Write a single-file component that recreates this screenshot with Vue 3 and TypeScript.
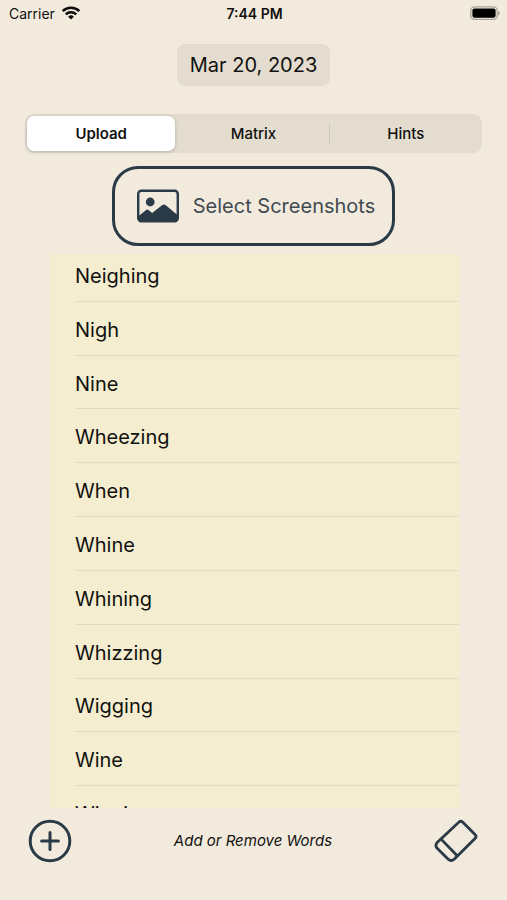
<script setup lang="ts">
import { ref } from 'vue'

const tabs: string[] = ['Upload', 'Matrix', 'Hints']
const active = ref<number>(0)
const words = ref<string[]>([
  'Neighing', 'Nigh', 'Nine', 'Wheezing', 'When', 'Whine',
  'Whining', 'Whizzing', 'Wigging', 'Wine', 'Winning',
])
</script>

<template>
  <div class="screen">
    <header class="status">
      <div class="carrier">
        <span>Carrier</span>
        <svg width="20" height="14" viewBox="0 0 20 14" aria-hidden="true">
          <g fill="none" stroke="#0b0b0a" stroke-width="2.5">
            <path d="M1.7 5.2a11.8 11.8 0 0 1 16.6 0" />
            <path d="M4.8 8.4a7.4 7.4 0 0 1 10.4 0" />
          </g>
          <path d="M10 13.6 7.1 10.7a4.1 4.1 0 0 1 5.8 0z" fill="#0b0b0a" />
        </svg>
      </div>
      <span class="clock">7:44 PM</span>
      <svg class="battery" width="30" height="14" viewBox="0 0 30 14" aria-hidden="true">
        <rect x="0.8" y="0.8" width="26.4" height="12.6" rx="3.8" fill="none" stroke="#a8a398" stroke-width="1.3" />
        <rect x="2.4" y="2.4" width="23.2" height="9.4" rx="2.2" fill="#000" />
        <path d="M28.2 5a2.3 2.3 0 0 1 0 4.4z" fill="#a8a398" />
      </svg>
    </header>

    <button type="button" class="date">Mar 20, 2023</button>

    <div class="tabs" role="tablist">
      <button
        v-for="(tab, i) in tabs"
        :key="tab"
        type="button"
        role="tab"
        class="tab"
        :class="{ active: i === active, divided: i > 0 && i !== active && i - 1 !== active }"
        :aria-selected="i === active"
        @click="active = i"
      >{{ tab }}</button>
    </div>

    <button type="button" class="select">
      <svg width="44" height="34" viewBox="0 0 44 34" aria-hidden="true">
        <rect x="2.2" y="1.7" width="39.6" height="30.6" rx="3.2" fill="none" stroke="#2a3a47" stroke-width="2.4" />
        <circle cx="14.2" cy="13" r="4.4" fill="#2a3a47" />
        <path d="M2 27.400 9.800 21.200q1.500-1.200 3 0l3.300 2.900 9.900-7.800q1.900-1.500 3.800 0L42 26.600v3.400q0 2.500-2.500 2.500h-35Q2 32.500 2 30z" fill="#2a3a47" />
      </svg>
      <span>Select Screenshots</span>
    </button>

    <main class="list">
      <ul class="words">
        <li v-for="word in words" :key="word">{{ word }}</li>
      </ul>
    </main>

    <footer class="footer">
      <button type="button" class="icon" aria-label="Add word">
        <svg width="44" height="44" viewBox="0 0 44 44" fill="none" stroke="#2a3a47" stroke-width="3" stroke-linecap="round">
          <circle cx="22" cy="22" r="19.8" />
          <path d="M22 13.600v16.800M13.600 22h16.800" />
        </svg>
      </button>
      <span class="hint">Add or Remove Words</span>
      <button type="button" class="icon" aria-label="Erase words">
        <svg width="44" height="44" viewBox="0 0 44 44" fill="none" stroke="#2a3a47" stroke-width="2.8" stroke-linejoin="round">
          <path d="M24.800 3.200q2-2 4 0l12.200 12.200q2 2 0 4L20.400 40q-3.200 3-6.400 0L3.400 29.600q-3-3.200 0-6.400z" />
          <path d="M7.600 20.600 23.200 36.800" />
        </svg>
      </button>
    </footer>
  </div>
</template>

<style>
body {
  background: #f2eadd;
}
</style>

<style scoped>
.screen {
  box-sizing: border-box;
  height: 100vh;
  display: flex;
  flex-direction: column;
  align-items: center;
  overflow: hidden;
  background: #f2eadd;
  color: #11110f;
  font-family: Inter, "Liberation Sans", sans-serif;
}

button {
  margin: 0;
  padding: 0;
  border: 0;
  background: none;
  color: inherit;
  font: inherit;
  cursor: pointer;
}

svg {
  display: block;
  flex: none;
}

.status {
  box-sizing: border-box;
  align-self: stretch;
  display: grid;
  grid-template-columns: 1fr auto 1fr;
  align-items: center;
  height: 26px;
  padding: 0 7px 0 9px;
  font-size: 14px;
}

.carrier {
  display: flex;
  align-items: center;
  gap: 6px;
}

.clock {
  font-weight: 600;
}

.battery {
  justify-self: end;
}

.date {
  height: 42px;
  margin-top: 18px;
  padding: 0 13px;
  border-radius: 8px;
  background: #e3dccf;
  font-size: 20px;
}

.tabs {
  align-self: stretch;
  display: grid;
  grid-template-columns: repeat(3, 1fr);
  gap: 4px;
  height: 35px;
  margin: 28px 25px 0;
  padding: 2px;
  border-radius: 9px;
  background: #e3dccf;
}

.tab {
  position: relative;
  border-radius: 7px;
  font-size: 15px;
  font-weight: 500;
}

.tab.active {
  background: #fff;
  font-weight: 600;
  box-shadow: 0 1px 4px rgba(0, 0, 0, 0.2);
}

.tab.divided::before {
  content: "";
  position: absolute;
  left: -3px;
  top: 7px;
  bottom: 7px;
  width: 1px;
  background: #d0cabe;
}

.select {
  display: flex;
  align-items: center;
  gap: 13px;
  height: 80px;
  margin-top: 13px;
  padding: 0 17px 0 21px;
  border: 3px solid #2a3a47;
  border-radius: 26px;
  color: #3f4a52;
  font-size: 20px;
}

.list {
  align-self: stretch;
  flex: 1 1 0;
  min-height: 0;
  margin: 8px 48px 0 50px;
  overflow: hidden;
  background: #f4edcf;
}

.words {
  display: grid;
  grid-auto-rows: 1fr;
  height: 592px;
  margin: -6px 0 0;
  padding: 0 0 0 25px;
  list-style: none;
  font-size: 20px;
}

.words li {
  display: flex;
  align-items: center;
  padding-top: 3px;
  border-bottom: 1px solid #e3dcc2;
}

.footer {
  box-sizing: border-box;
  align-self: stretch;
  display: flex;
  align-items: flex-start;
  justify-content: space-between;
  height: 92px;
  padding: 11px 29px 0 28px;
}

.icon {
  width: 44px;
  height: 44px;
}

.hint {
  line-height: 44px;
  font-size: 15px;
  font-style: italic;
}
</style>
